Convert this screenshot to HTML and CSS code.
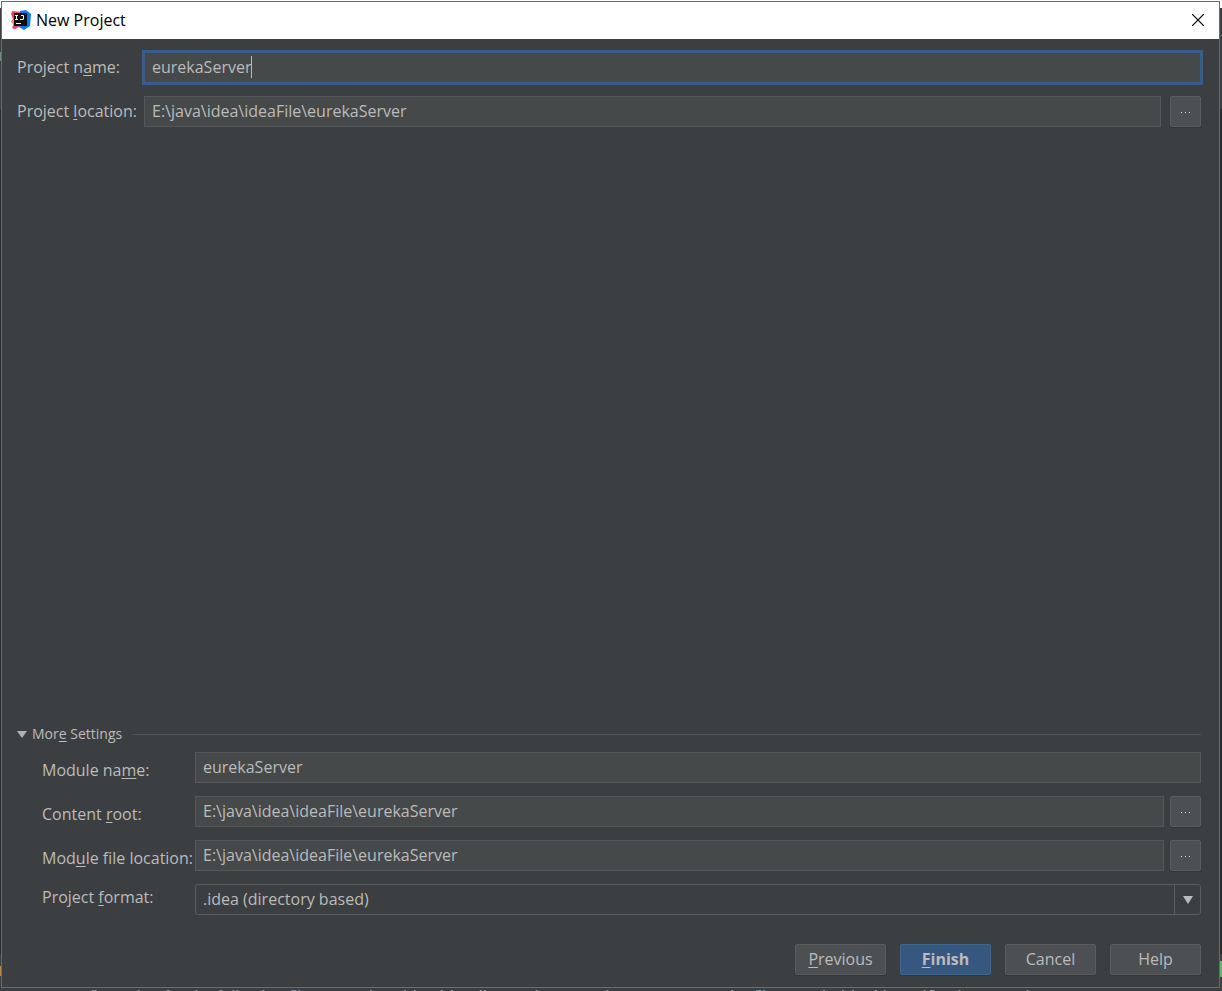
FILE: index.html
```html
<!DOCTYPE html>
<html lang="en">
<head>
<meta charset="utf-8">
<title>New Project</title>
<link rel="stylesheet" href="styles.css">
</head>
<body>
<main class="dialog">
  <header class="titlebar">
    <svg class="logo" viewBox="0 0 20 20" aria-hidden="true">
      <path d="M1 1 10 2 9 10 5 19 1 18 3 13 0 12 2 9 0 4z" fill="#f4405f"/>
      <path d="M0 11 5 9 6 17 3 16z" fill="#f68b32"/>
      <path d="M9 1 15 0 20 4 19 16 13 20 8 17z" fill="#087cf2"/>
      <path d="M4 16 10 16 6 18 2 19z" fill="#e7468f"/>
      <rect x="3" y="3" width="13" height="13" fill="#101010"/>
      <path d="M4 5.500h3M5.500 5.500v4M4 9.500h3M10 5.500h2.500v4M9 9.500h3" fill="none" stroke="#fff" stroke-width="1"/>
      <path d="M5 13.500h5" stroke="#fff" stroke-width="1"/>
    </svg>
    <h1 class="title">New Project</h1>
    <button class="close" type="button" aria-label="Close">
      <svg viewBox="0 0 12 12" width="12" height="12"><path d="M0 0 12 12M12 0 0 12" stroke="#000" stroke-width="1.200"/></svg>
    </button>
  </header>
  <form class="content">
    <div class="rows project">
      <label for="project-name">Project n<u>a</u>me:</label>
      <div class="field focused"><input id="project-name" type="text" value="eurekaServer"><span class="caret"></span></div>
      <label for="project-location">Project <u>l</u>ocation:</label>
      <div class="field browse">
        <input id="project-location" type="text" value="E:\java\idea\ideaFile\eurekaServer">
        <button class="dots" type="button" aria-label="Browse project location"><i></i><i></i><i></i></button>
      </div>
    </div>
    <section class="more">
      <button class="toggle" type="button" aria-expanded="true">
        <svg viewBox="0 0 10 7" width="10" height="7"><path d="M0 0h10L5 7z" fill="#afb1b3"/></svg>
        <span>Mor<u>e</u> Settings</span>
      </button>
      <div class="rows module">
        <label for="module-name">Module na<u>m</u>e:</label>
        <div class="field"><input id="module-name" type="text" value="eurekaServer"></div>
        <label for="content-root">Content <u>r</u>oot:</label>
        <div class="field browse">
          <input id="content-root" type="text" value="E:\java\idea\ideaFile\eurekaServer">
          <button class="dots" type="button" aria-label="Browse content root"><i></i><i></i><i></i></button>
        </div>
        <label for="module-location">Mod<u>u</u>le file location:</label>
        <div class="field browse">
          <input id="module-location" type="text" value="E:\java\idea\ideaFile\eurekaServer">
          <button class="dots" type="button" aria-label="Browse module file location"><i></i><i></i><i></i></button>
        </div>
        <label class="format" for="project-format">Project <u>f</u>ormat:</label>
        <div class="field combo">
          <select id="project-format"><option>.idea (directory based)</option></select>
          <span class="arrow"><svg viewBox="0 0 10 8" width="10" height="8"><path d="M0 0h10L5 8z" fill="#bbb"/></svg></span>
        </div>
      </div>
    </section>
    <footer class="actions">
      <button type="button"><u>P</u>revious</button>
      <button class="primary" type="submit"><u>F</u>inish</button>
      <button type="button">Cancel</button>
      <button type="button">Help</button>
    </footer>
  </form>
</main>
<svg class="ticks" viewBox="0 0 1222 1" preserveAspectRatio="none" aria-hidden="true">
  <path stroke="#7f93a6" d="M91 .5h5M137 .5h2M166 .5h3M195 .5h2M219 .5h3M232 .5h2M236 .5h2M262 .5h2M291 .5h5M298 .5h2M370 .5h2M404 .5h2M414 .5h2M441 .5h2M451 .5h2M480 .5h2M484 .5h2M536 .5h2M607 .5h2M732 .5h2M757 .5h5M764 .5h2M824 .5h2M843 .5h2M853 .5h2M876 .5h2M885 .5h2M925 .5h2M931 .5h5M960 .5h2M1028 .5h2"/>
</svg>
</body>
</html>
```
FILE: styles.css
```css
* { box-sizing: border-box; }

body {
  margin: 0;
  min-height: 100vh;
  display: flex;
  flex-direction: column;
  padding: 1px 2px 0 1px;
  color: #bbb;
  font: 16px/22px "Open Sans", "Noto Sans", sans-serif;
  background:
    linear-gradient(#5fb865, #5fb865) right 961px / 2px 16px no-repeat,
    linear-gradient(#b98550, #b98550) left 966px / 1px 10px no-repeat,
    linear-gradient(#555, #555) right 35px / 2px 1px no-repeat,
    linear-gradient(#6f8b7b, #6f8b7b) left 52px / 1px 9px no-repeat,
    linear-gradient(#fff 8px, #3c3f41 8px, #3c3f41 109px, #2b2b2b 109px, #2b2b2b 954px, #3c3f41 954px);
}

button, input, select { font: inherit; color: inherit; margin: 0; }
u { text-underline-offset: 2px; text-decoration-thickness: 1px; text-decoration-skip-ink: none; }

.dialog {
  flex: 1;
  display: flex;
  flex-direction: column;
  border: 1px solid #1f7fcd;
  background: #3c3f41;
}

.titlebar {
  display: flex;
  align-items: center;
  height: 37px;
  padding: 0 15px 2px 9px;
  background: #fff;
  color: #000;
}
.logo { width: 20px; height: 20px; margin-right: 5px; }
.title { flex: 1; margin: 0; font-size: 16px; font-weight: 400; }
.close { display: flex; padding: 0; border: 0; background: none; }

.content {
  flex: 1;
  display: flex;
  flex-direction: column;
  padding: 13px 18px 12px 15px;
}

.rows { display: grid; row-gap: 13px; }
.rows label { white-space: nowrap; padding-top: 4px; }
.project { grid-template-columns: 127px 1fr; }
.module { grid-template-columns: 153px 1fr; padding-left: 25px; }
.module label { padding-top: 7px; }
.module .format { padding-top: 2px; }

.field { position: relative; display: flex; height: 31px; }
.field input {
  flex: 1;
  min-width: 0;
  padding: 0 7px 2px;
  border: 1px solid #55585a;
  background: #45494a;
  outline: 0;
}
.project .browse { gap: 9px; }
.module .browse { gap: 6px; }
.focused input { border-color: #3a5d87; box-shadow: 0 0 0 2px #3a5d87; }
.caret { position: absolute; left: 107px; top: 4px; width: 1px; height: 22px; background: #bbb; }

.dots {
  display: flex;
  align-items: center;
  justify-content: center;
  gap: 3px;
  width: 31px;
  padding: 2px 0 0;
  border: 1px solid #5a5d5f;
  border-radius: 2px;
  background: #4c5052;
  box-shadow: 0 1px 1px #343638;
}
.dots i { width: 1px; height: 1px; background: #ddd; }

.more { margin-top: auto; }
.toggle {
  display: flex;
  align-items: center;
  width: 100%;
  height: 20px;
  margin-bottom: 8px;
  padding: 0;
  border: 0;
  background: none;
  font-size: 14px;
}
.toggle span { margin: 0 10px 0 5px; }
.toggle::after { content: ""; flex: 1; height: 1px; background: #515456; }

.combo select {
  flex: 1;
  appearance: none;
  padding: 0 34px 1px 7px;
  border: 1px solid #5a5d5f;
  border-radius: 3px;
  background: #3c3f41;
}
.arrow {
  position: absolute;
  top: 1px;
  right: 1px;
  bottom: 1px;
  width: 26px;
  display: flex;
  align-items: center;
  justify-content: center;
  border-left: 1px solid #5a5d5f;
  pointer-events: none;
}

.actions { display: flex; justify-content: flex-end; gap: 14px; margin-top: 29px; }
.actions button {
  width: 91px;
  height: 31px;
  padding: 0 0 1px;
  border: 1px solid #5a5d5f;
  border-radius: 2px;
  background: #4c5052;
  box-shadow: 0 1px 1px #343638;
}
.actions .primary { border-color: #43668c; background: #365880; font-weight: 700; }

.ticks { display: block; width: 100%; height: 1px; margin-top: 2px; }
```
